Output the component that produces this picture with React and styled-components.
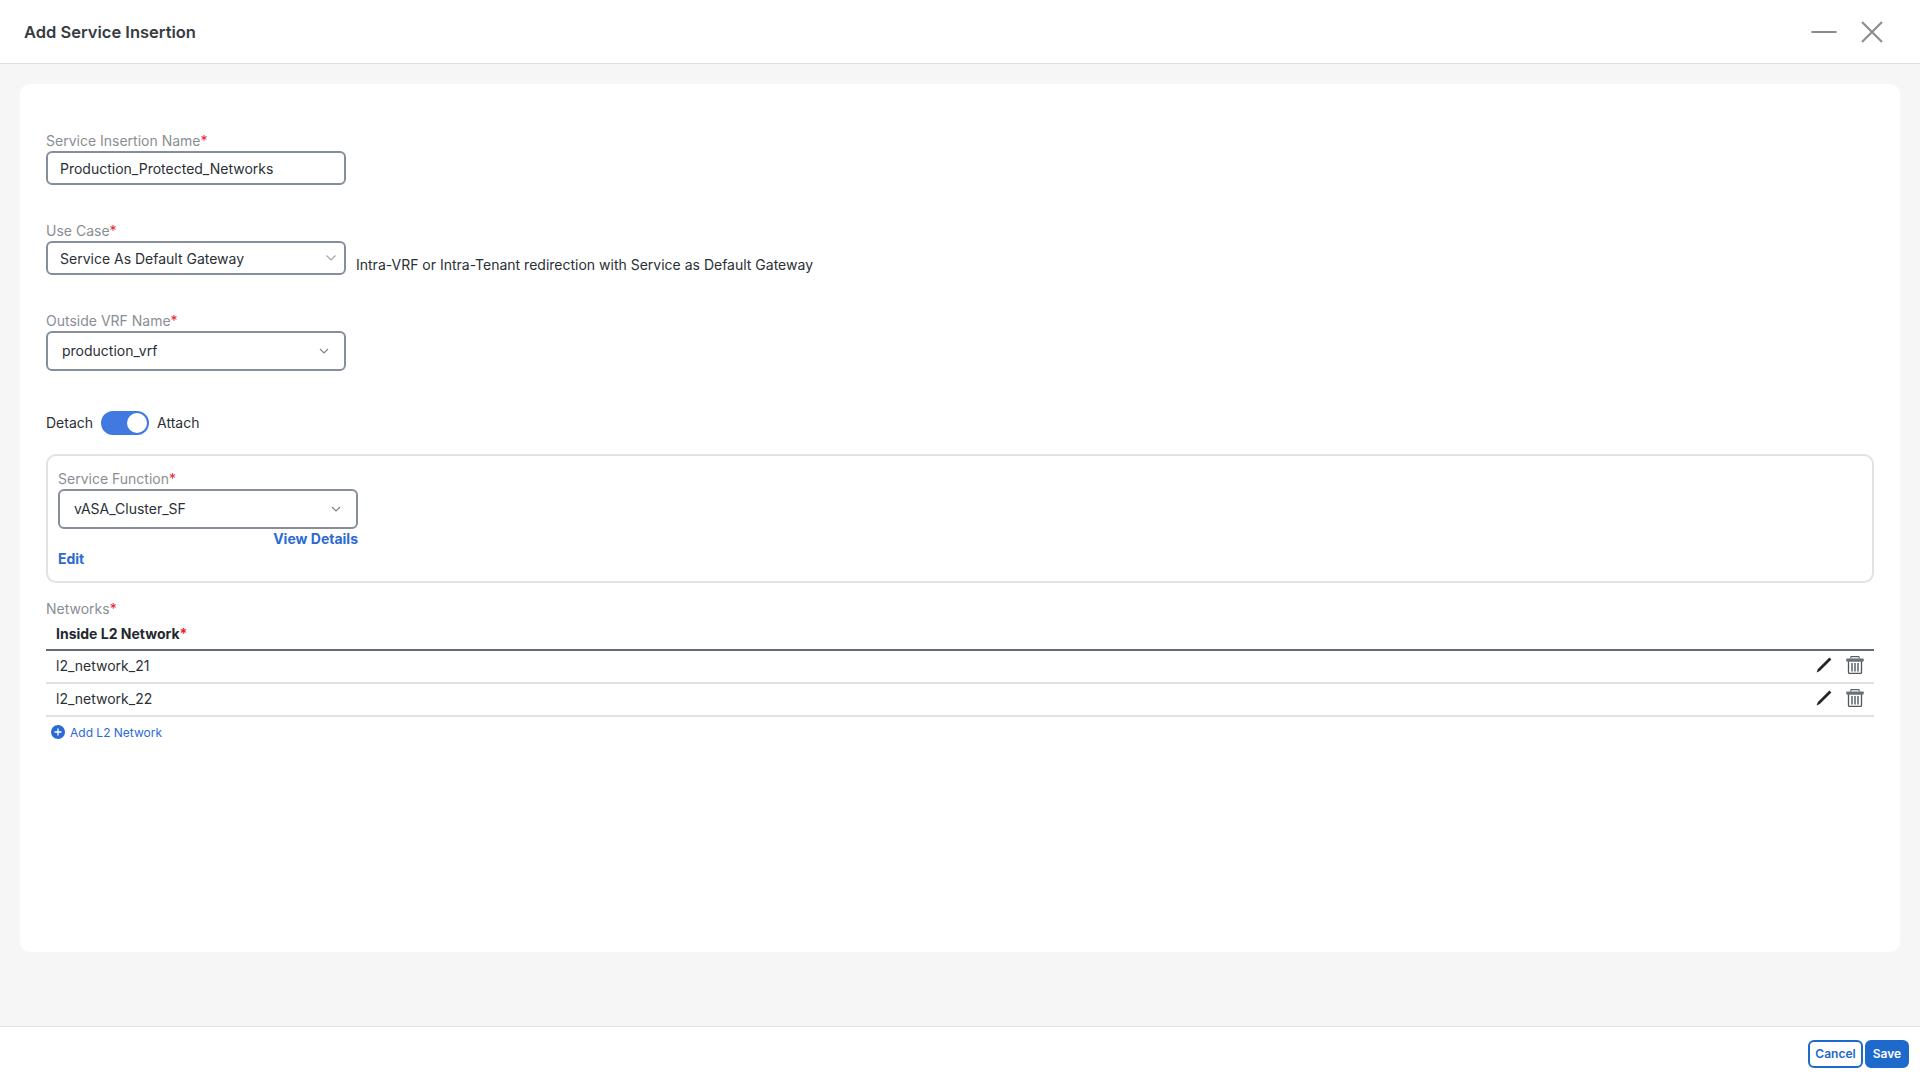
import React from "react";
import styled, { createGlobalStyle } from "styled-components";

const GlobalStyle = createGlobalStyle`
  html, body { margin: 0; padding: 0; }
  body { font-family: Inter, "Liberation Sans", sans-serif; color: #23282e; background: #fff; }
  * { box-sizing: border-box; }
`;

const Page = styled.div`
  display: flex;
  flex-direction: column;
  height: 1080px;
  overflow: hidden;
`;

const Header = styled.header`
  display: flex;
  align-items: center;
  justify-content: space-between;
  flex: 0 0 64px;
  padding: 0 37px 0 24px;
  background: #fff;
  border-bottom: 1px solid #e0e0e0;
`;

const Title = styled.h1`
  margin: 0;
  font-size: 16.5px;
  font-weight: 600;
  color: #373c42;
`;

const WindowButtons = styled.div`
  display: flex;
  align-items: center;
  gap: 24px;
  margin-top: 1px;
  color: #8a8a8a;
`;

const Main = styled.main`
  flex: 1;
  padding: 20px 20px 0;
  background: #f6f6f6;
`;

const Card = styled.section`
  height: 868px;
  padding: 48px 26px 0;
  background: #fff;
  border-radius: 10px;
`;

const Field = styled.div`
  width: 300px;
  margin-bottom: ${p => p.$gap || 0}px;
`;

const Label = styled.label`
  display: block;
  height: 19px;
  font-size: 14px;
  line-height: 17px;
  color: #8a8e94;

  i {
    font-style: normal;
    color: #e5262a;
  }
`;

const Input = styled.div`
  display: flex;
  align-items: center;
  height: ${p => p.$height || 34}px;
  padding: 0 ${p => p.$right || 8}px ${p => (p.$height ? 1 : 0)}px ${p => p.$left || 12}px;
  font-size: 14px;
  color: #2b3036;
  background: #fff;
  border: 2px solid #868e9b;
  border-radius: 6px;

  span { flex: 1; }
`;

const Row = styled.div`
  display: flex;
`;

const Hint = styled.span`
  margin: 33px 0 0 10px;
  font-size: 14px;
  line-height: 19px;
  color: #2b3036;
`;

const ToggleRow = styled.div`
  display: flex;
  align-items: center;
  gap: 8px;
  height: 24px;
  margin-bottom: 19px;
  font-size: 14px;
  color: #2b3036;
`;

const ToggleText = styled.span`
  margin-bottom: 2px;
`;

const Toggle = styled.div`
  display: flex;
  align-items: center;
  justify-content: flex-end;
  width: 48px;
  height: 24px;
  padding-right: 2px;
  background: #4179e0;
  border-radius: 12px;

  &::after {
    content: "";
    width: 20px;
    height: 20px;
    background: #fff;
    border-radius: 50%;
  }
`;

const FunctionBox = styled.div`
  height: 129px;
  padding: 14px 10px 0;
  margin-bottom: 17px;
  border: 2px solid #e2e2e2;
  border-radius: 10px;
`;

const Link = styled.a`
  display: block;
  font-size: 14px;
  font-weight: 700;
  line-height: 20px;
  color: #2b6ad4;
  text-align: ${p => p.$align || "left"};
`;

const Table = styled.div`
  display: flex;
  flex-direction: column;
`;

const HeadCell = styled.div`
  height: 32px;
  padding: 0 10px;
  font-size: 14px;
  font-weight: 700;
  line-height: 30px;
  color: #23282e;
  border-bottom: 2px solid #646b78;

  i {
    font-style: normal;
    color: #e5262a;
  }
`;

const NetworkRow = styled.div`
  display: flex;
  align-items: center;
  justify-content: space-between;
  height: 33px;
  padding: 0 10px 3px;
  font-size: 14px;
  color: #2b3036;
  border-bottom: 2px solid #e2e2e2;
`;

const RowActions = styled.div`
  display: flex;
  align-items: center;
  gap: 14px;
`;

const AddLink = styled.a`
  display: flex;
  align-items: center;
  gap: 5px;
  height: 30px;
  padding-left: 5px;
  font-size: 12px;
  color: #2b6ad4;
`;

const Footer = styled.footer`
  display: flex;
  justify-content: flex-end;
  gap: 2px;
  flex: 0 0 54px;
  padding: 13px 11px 0 0;
  background: #fff;
  border-top: 1px solid #e0e0e0;
`;

const Button = styled.button`
  height: 28px;
  width: ${p => p.$width}px;
  padding: 0 0 2px;
  font: 600 12px Inter, "Liberation Sans", sans-serif;
  color: ${p => (p.$primary ? "#fff" : "#1d69cc")};
  background: ${p => (p.$primary ? "#1d69cc" : "#fff")};
  border: 2px solid #1d69cc;
  border-radius: 6px;
`;

const Chevron = ({ color = "#7d8490", spread = 4 }) => (
  <svg width="12" height="8" viewBox="0 0 12 8" fill="none">
    <path d={`M${6 - spread} ${6 - spread} 6 6 ${6 + spread} ${6 - spread}`} stroke={color} strokeWidth="1.2" />
  </svg>
);

const Pencil = () => (
  <svg width="16" height="16" viewBox="0 0 16 16">
    <path d="M13.4 0.6 15.4 2.6 3.8 14 0.6 15.4 1.9 12.1Z" fill="#23282e" />
  </svg>
);

const Trash = () => (
  <svg width="18" height="18" viewBox="0 0 18 18">
    <path d="M4.8 2.6V1.2C4.8.8 5 .6 5.4.6h7.2c.4 0 .6.2.6.6v1.4" fill="none" stroke="#5a6069" strokeWidth="1.1" />
    <path d="M0.6 2.4h16.8l0.6 1.3-.8 2H.8l-.8-2Z" fill="#6a6f78" />
    <path d="M2.5 5.5v10.8c0 .8.5 1.2 1.2 1.2h10.6c.7 0 1.2-.4 1.2-1.2V5.5" fill="none" stroke="#50565f" strokeWidth="1.3" />
    <path d="M6 7v8.6M9 7v8.6M12 7v8.6" stroke="#6f757e" strokeWidth="1.7" />
  </svg>
);

const PlusCircle = () => (
  <svg width="14" height="14" viewBox="0 0 14 14">
    <circle cx="7" cy="7" r="7" fill="#2b6ad4" />
    <path d="M7 3.5v7M3.5 7h7" stroke="#fff" strokeWidth="1.3" />
  </svg>
);

const networks = ["l2_network_21", "l2_network_22"];

export default function App() {
  return (
    <Page>
      <GlobalStyle />
      <Header>
        <Title>Add Service Insertion</Title>
        <WindowButtons>
          <svg width="26" height="4" viewBox="0 0 26 4">
            <path d="M0.5 2h25" stroke="currentColor" strokeWidth="2" />
          </svg>
          <svg width="22" height="22" viewBox="0 0 22 22">
            <path d="M1 1l20 20M21 1 1 21" stroke="currentColor" strokeWidth="2" />
          </svg>
        </WindowButtons>
      </Header>

      <Main>
        <Card>
          <Field $gap={37}>
            <Label>Service Insertion Name<i>*</i></Label>
            <Input>Production_Protected_Networks</Input>
          </Field>

          <Row>
            <Field $gap={37}>
              <Label>Use Case<i>*</i></Label>
              <Input $right={7}>
                <span>Service As Default Gateway</span>
                <Chevron color="#a2a7af" spread={4.5} />
              </Input>
            </Field>
            <Hint>Intra-VRF or Intra-Tenant redirection with Service as Default Gateway</Hint>
          </Row>

          <Field $gap={40}>
            <Label>Outside VRF Name<i>*</i></Label>
            <Input $height={40} $left={14} $right={14}>
              <span>production_vrf</span>
              <Chevron />
            </Input>
          </Field>

          <ToggleRow>
            <ToggleText>Detach</ToggleText>
            <Toggle />
            <ToggleText>Attach</ToggleText>
          </ToggleRow>

          <FunctionBox>
            <Field>
              <Label>Service Function<i>*</i></Label>
              <Input $height={40} $left={14} $right={14}>
                <span>vASA_Cluster_SF</span>
                <Chevron />
              </Input>
              <Link $align="right">View Details</Link>
              <Link>Edit</Link>
            </Field>
          </FunctionBox>

          <Label>Networks<i>*</i></Label>
          <Table>
            <HeadCell>Inside L2 Network<i>*</i></HeadCell>
            {networks.map(name => (
              <NetworkRow key={name}>
                {name}
                <RowActions>
                  <Pencil />
                  <Trash />
                </RowActions>
              </NetworkRow>
            ))}
          </Table>
          <AddLink>
            <PlusCircle />
            Add L2 Network
          </AddLink>
        </Card>
      </Main>

      <Footer>
        <Button $width={55}>Cancel</Button>
        <Button $width={44} $primary>Save</Button>
      </Footer>
    </Page>
  );
}
